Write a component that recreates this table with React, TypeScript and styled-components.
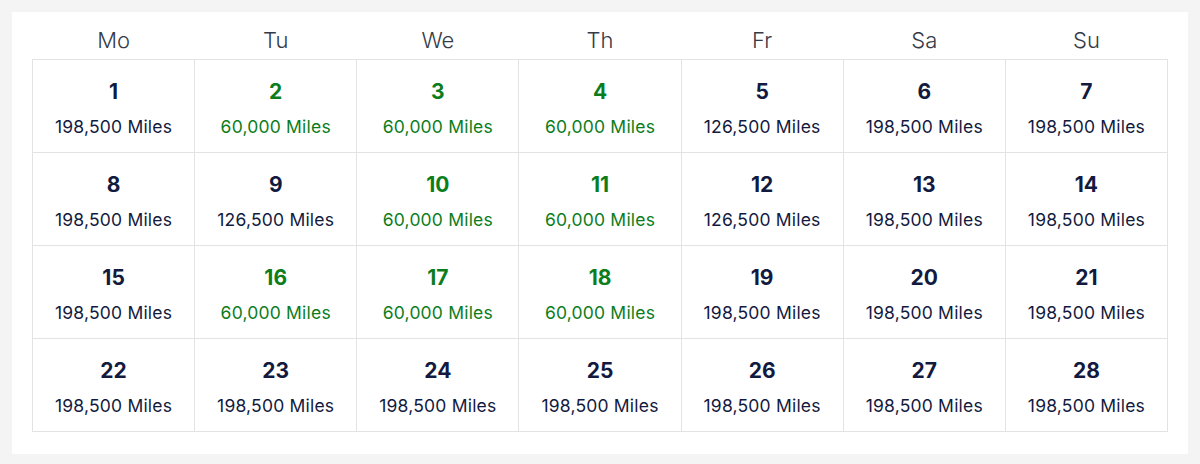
import React from "react";
import styled, { createGlobalStyle } from "styled-components";

const Global = createGlobalStyle`
  html, body { margin: 0; padding: 0; background: #f4f4f4; }
  body { font-family: "Inter", "Lato", sans-serif; }
`;

const Page = styled.div`
  padding: 12px;
`;

const Card = styled.div`
  background: #ffffff;
  padding: 0 20px 22px 20px;
`;

const HeaderRow = styled.div`
  display: grid;
  grid-template-columns: repeat(7, 1fr);
  height: 47px;
  padding: 0 1px;
  column-gap: 1px;
`;

const HeaderCell = styled.div`
  display: flex;
  align-items: center;
  justify-content: center;
  padding-top: 9px;
  font-size: 22px;
  color: #353a48;
  font-weight: 300;
`;

const Grid = styled.div`
  display: grid;
  grid-template-columns: repeat(7, 1fr);
  grid-auto-rows: 92px;
  gap: 1px;
  padding: 1px;
  background: #e3e3e3;
`;

const Cell = styled.div<{ $green: boolean }>`
  background: #ffffff;
  display: flex;
  flex-direction: column;
  align-items: center;
  padding-top: 19px;
  color: ${(p) => (p.$green ? "#0b7d1c" : "#121a40")};
`;

const Day = styled.div`
  font-size: 21px;
  font-weight: 700;
  line-height: 26px;
`;

const Miles = styled.div`
  margin-top: 10px;
  font-size: 17.5px;
  line-height: 24px;
  font-weight: 400;
  letter-spacing: 0.2px;
`;

const days = ["Mo", "Tu", "We", "Th", "Fr", "Sa", "Su"];
const miles = [
  "198,500", "60,000", "60,000", "60,000", "126,500", "198,500", "198,500",
  "198,500", "126,500", "60,000", "60,000", "126,500", "198,500", "198,500",
  "198,500", "60,000", "60,000", "60,000", "198,500", "198,500", "198,500",
  "198,500", "198,500", "198,500", "198,500", "198,500", "198,500", "198,500",
];

export default function App() {
  return (
    <Page>
      <Global />
      <Card>
        <HeaderRow>
          {days.map((d) => (
            <HeaderCell key={d}>{d}</HeaderCell>
          ))}
        </HeaderRow>
        <Grid>
          {miles.map((m, i) => (
            <Cell key={i} $green={m === "60,000"}>
              <Day>{i + 1}</Day>
              <Miles>{m} Miles</Miles>
            </Cell>
          ))}
        </Grid>
      </Card>
    </Page>
  );
}
